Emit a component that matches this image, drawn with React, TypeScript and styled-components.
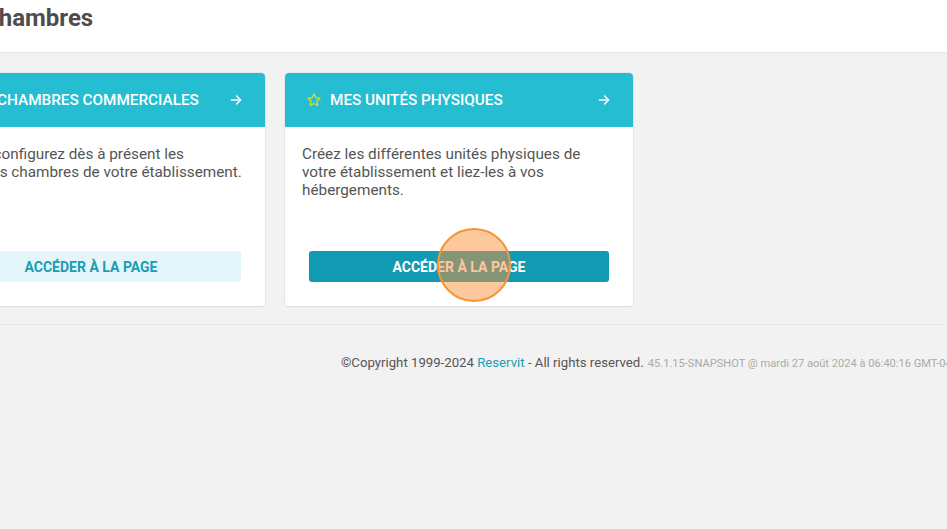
import React from "react";
import styled, { createGlobalStyle } from "styled-components";

const Global = createGlobalStyle`
  html, body { margin: 0; padding: 0; }
  body {
    background: #f2f2f2;
    font-family: Roboto, "Liberation Sans", Arial, sans-serif;
    color: #555;
    overflow: hidden;
  }
`;

const Viewport = styled.div`
  width: 947px;
  height: 529px;
  overflow: hidden;
  position: relative;
`;

const TopBar = styled.header`
  background: #fff;
  height: 52px;
  border-bottom: 1px solid #e6e6e6;
  overflow: hidden;
`;

const Scrolled = styled.div`
  margin-left: -83px;
`;

const Title = styled.h1`
  margin: 0;
  padding: 4px 0 0 17px;
  font-size: 24px;
  line-height: 28px;
  font-weight: 700;
  color: #4d4d4d;
  white-space: nowrap;
`;

const CardsRow = styled.div`
  display: flex;
  gap: 20px;
  padding-top: 20px;
`;

const Card = styled.section`
  width: 348px;
  height: 233px;
  background: #fff;
  border-radius: 4px;
  box-shadow: 0 0 0 1px rgba(0, 0, 0, 0.04), 0 1px 2px rgba(0, 0, 0, 0.05);
  display: flex;
  flex-direction: column;
  overflow: hidden;
  flex: none;
`;

const CardHead = styled.div`
  height: 54px;
  background: #25bdd1;
  display: flex;
  align-items: center;
  padding: 0 22px 0 21px;
  gap: 8px;
  color: #fff;
`;

const CardTitle = styled.span`
  flex: 1;
  font-size: 15.3px;
  font-weight: 500;
  white-space: nowrap;
`;

const CardBody = styled.div`
  flex: 1;
  display: flex;
  flex-direction: column;
  padding: 18px 20px 24px 17px;
`;

const CardText = styled.p`
  margin: 0;
  font-size: 15.3px;
  line-height: 18px;
  color: #555;
`;

const PageButton = styled.button<{ $primary?: boolean }>`
  margin: auto 4px 0 7px;
  height: 31px;
  border: none;
  border-radius: 3px;
  font-family: Roboto, "Liberation Sans", Arial, sans-serif;
  font-size: 14px;
  font-weight: 700;
  background: ${(p) => (p.$primary ? "#1299b3" : "#e4f6f9")};
  color: ${(p) => (p.$primary ? "#fff" : "#1a9db2")};
  cursor: pointer;
`;

const Divider = styled.hr`
  margin: 18px 0 0 0;
  border: none;
  border-top: 1px solid #e8e8e8;
`;

const Footer = styled.footer`
  padding: 30px 0 0 341px;
  font-size: 13.2px;
  line-height: 16px;
  color: #555;
  white-space: nowrap;
`;

const Brand = styled.span`
  color: #1a9db2;
`;

const Version = styled.span`
  font-size: 11.1px;
  color: #aaa;
  margin-left: 4px;
`;

const Cursor = styled.div`
  position: absolute;
  left: 437px;
  top: 228px;
  width: 70px;
  height: 70px;
  border-radius: 50%;
  border: 2px solid #f3953a;
  background: rgba(250, 145, 57, 0.5);
  pointer-events: none;
`;

const Arrow = () => (
  <svg width="14" height="14" viewBox="0 0 24 24" fill="none" stroke="#fff" strokeWidth="2.6" strokeLinecap="round" strokeLinejoin="round">
    <path d="M4 12h15" />
    <path d="M13 5l7 7-7 7" />
  </svg>
);

const Star = () => (
  <svg width="16" height="16" viewBox="0 0 24 24" fill="none" stroke="#cfdd3a" strokeWidth="2" strokeLinejoin="round">
    <path d="M12 2.8l2.8 5.8 6.3.9-4.6 4.4 1.1 6.3L12 17.2l-5.6 3 1.1-6.3-4.6-4.4 6.3-.9z" />
  </svg>
);

export default function App() {
  return (
    <Viewport>
      <Global />
      <TopBar>
        <Scrolled>
          <Title>Mes chambres</Title>
        </Scrolled>
      </TopBar>
      <Scrolled>
        <CardsRow>
          <Card>
            <CardHead>
              <Star />
              <CardTitle>MES CHAMBRES COMMERCIALES</CardTitle>
              <Arrow />
            </CardHead>
            <CardBody>
              <CardText>
                Créez et configurez dès à présent les différentes chambres de votre établissement.
              </CardText>
              <PageButton>ACCÉDER À LA PAGE</PageButton>
            </CardBody>
          </Card>
          <Card>
            <CardHead>
              <Star />
              <CardTitle>MES UNITÉS PHYSIQUES</CardTitle>
              <Arrow />
            </CardHead>
            <CardBody>
              <CardText>
                Créez les différentes unités physiques de votre établissement et liez-les à vos hébergements.
              </CardText>
              <PageButton $primary>ACCÉDER À LA PAGE</PageButton>
            </CardBody>
          </Card>
        </CardsRow>
      </Scrolled>
      <Divider />
      <Footer>
        ©Copyright 1999-2024 <Brand>Reservit</Brand> - All rights reserved.
        <Version>45.1.15-SNAPSHOT @ mardi 27 août 2024 à 06:40:16 GMT-04:00</Version>
      </Footer>
      <Cursor />
    </Viewport>
  );
}
